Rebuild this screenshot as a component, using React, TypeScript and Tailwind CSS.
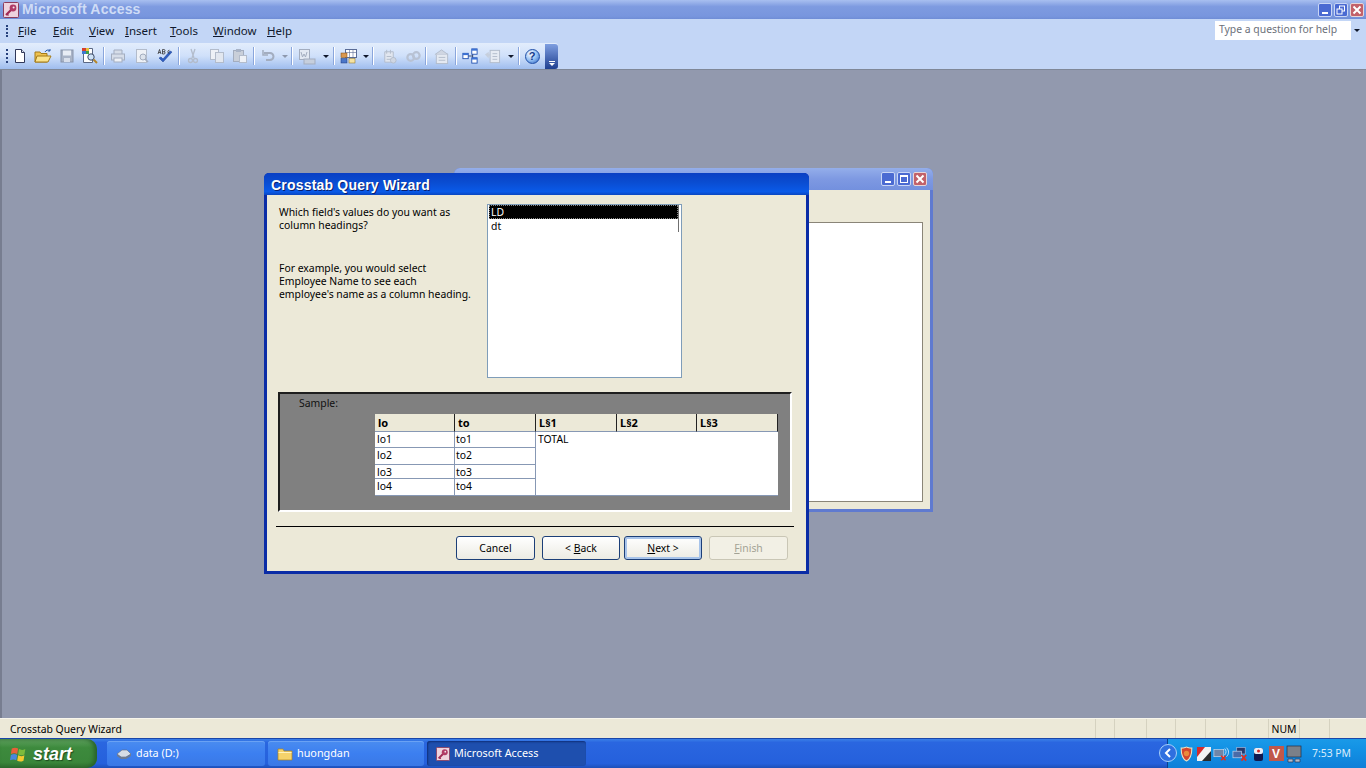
import type { ReactNode } from "react";

const ui = "font-['Noto_Sans',_'Liberation_Sans',_sans-serif]";

function Ul({ children }: { children: ReactNode }) {
  return <span className="underline underline-offset-1">{children}</span>;
}

function AccessIcon({ size = 16 }: { size?: number }) {
  return (
    <svg width={size} height={size} viewBox="0 0 16 16">
      <rect x="0.5" y="0.5" width="15" height="15" rx="1" fill="#eed3de" stroke="#8d3d5c" />
      <path d="M3 13 L8 8" stroke="#a02a55" strokeWidth="2.2" />
      <circle cx="10" cy="6" r="3.4" fill="#b03a66" />
      <circle cx="10.6" cy="5.4" r="1" fill="#f3e4ea" />
      <path d="M4 12l1.5 1.5" stroke="#a02a55" strokeWidth="1.4" />
    </svg>
  );
}

function WinButtons({ maximize }: { maximize?: boolean }) {
  const base = "w-[14px] h-[14px]";
  return (
    <div className="flex gap-[2px]">
      <div className={`${base} rounded-[2px] border border-[#c9d6f5] bg-[#4a6ad2] relative`}>
        <div className="absolute left-[3px] bottom-[2px] w-[6px] h-[2px] bg-white" />
      </div>
      <div className={`${base} rounded-[2px] border border-[#c9d6f5] bg-[#4a6ad2] flex items-center justify-center`}>
        {maximize ? (
          <div className="w-[8px] h-[8px] border border-white border-t-2" />
        ) : (
          <svg width="10" height="10" viewBox="0 0 10 10" fill="none" stroke="#fff">
            <rect x="3.5" y="1" width="5" height="5" />
            <rect x="1" y="4" width="5" height="5" fill="#4a6ad2" />
          </svg>
        )}
      </div>
      <div className={`${base} rounded-[2px] border border-[#e6d5d8] bg-[#c2616a] flex items-center justify-center`}>
        <svg width="10" height="10" viewBox="0 0 10 10" stroke="#fff" strokeWidth="2">
          <path d="M1.5 1.5l7 7M8.5 1.5l-7 7" />
        </svg>
      </div>
    </div>
  );
}

function Sep() {
  return <div className="w-[2px] h-[18px] mx-[1.25px] shrink-0 bg-[#8aa6dc] border-r border-white" />;
}

function Arrow({ dim, w = "w-[10px]" }: { dim?: boolean; w?: string }) {
  return (
    <div className={`${w} flex justify-center shrink-0`}>
      <div className={`border-x-[3px] border-t-[3px] border-x-transparent ${dim ? "border-t-[#8d98ad]" : "border-t-[#10182c]"}`} />
    </div>
  );
}

function Tool({ children, w = "w-[23.5px]" }: { children: ReactNode; w?: string }) {
  return <div className={`${w} h-[18px] flex items-center justify-center shrink-0`}>{children}</div>;
}

const Grey = { fill: "#d6dde8", stroke: "#a3adbf" };

function NewIcon() {
  return (
    <svg width="16" height="16" viewBox="0 0 16 16">
      <path d="M3.5 1.500h6l3 3v10h-9z" fill="#fff" stroke="#30385a" />
      <path d="M9.500 1.500v3h3" fill="#dfe6f2" stroke="#30385a" />
    </svg>
  );
}
function OpenIcon() {
  return (
    <svg width="18" height="16" viewBox="0 0 18 16">
      <path d="M1 4h5l1 1.500h6V14H1z" fill="#eec14f" stroke="#a47a18" />
      <path d="M3 8h14l-3 6H1z" fill="#fbe38a" stroke="#a47a18" />
      <path d="M11 4c1-2 3-2.500 5-1.500M16 1v2h-2" fill="none" stroke="#2a5cab" />
    </svg>
  );
}
function SaveIcon() {
  return (
    <svg width="16" height="16" viewBox="0 0 16 16">
      <rect x="2" y="2" width="12" height="12" fill="#a9b4c7" stroke="#8894aa" />
      <rect x="4" y="2.500" width="8" height="5" fill="#e8edf5" />
      <rect x="5" y="10" width="6" height="4" fill="#d8dfeb" />
    </svg>
  );
}
function SearchIcon() {
  return (
    <svg width="18" height="18" viewBox="0 0 18 18">
      <path d="M2.500 1.500h9v14h-9z" fill="#fff" stroke="#5b6884" />
      <rect x="1" y="1" width="4" height="3" fill="#d6402d" />
      <rect x="5" y="1" width="3" height="3" fill="#e8c13a" />
      <rect x="1" y="4" width="4" height="3" fill="#3e77d0" />
      <rect x="5" y="4" width="3" height="3" fill="#3fa04a" />
      <circle cx="10" cy="10" r="3.200" fill="#cfe3f7" stroke="#3d4a66" />
      <path d="M12.500 12.500l3.500 3.500" stroke="#b5862a" strokeWidth="2" />
    </svg>
  );
}
function PrintIcon() {
  return (
    <svg width="16" height="16" viewBox="0 0 16 16">
      <path d="M4 6V2h8v4" {...Grey} />
      <rect x="1.500" y="6" width="13" height="6" {...Grey} />
      <rect x="4" y="10" width="8" height="4" fill="#eef1f6" stroke="#a3adbf" />
    </svg>
  );
}
function PreviewIcon() {
  return (
    <svg width="16" height="16" viewBox="0 0 16 16">
      <rect x="2.500" y="1.500" width="10" height="13" fill="#eef1f6" stroke="#b3bccb" />
      <circle cx="9" cy="9" r="3" fill="#dde3ec" stroke="#a3adbf" />
      <path d="M11 11l3 3" stroke="#a3adbf" strokeWidth="1.600" />
    </svg>
  );
}
function SpellIcon() {
  return (
    <svg width="18" height="16" viewBox="0 0 18 16">
      <path d="M3 10l4 4 9-10-2-1-7 8-2-2z" fill="#2f5fc4" stroke="#1d3f8e" strokeWidth="0.500" />
      <path d="M2 6l1.500-4.500L5 6M2.600 4.500h1.800M6.500 1.500v4.500h1.400a1 1 0 0 0 0-2.300H6.500M7.900 3.700a1 1 0 0 0 0-2.200H6.500M13.500 2.200a1.600 1.600 0 1 0 0 3.200" fill="none" stroke="#333" strokeWidth="0.800" />
    </svg>
  );
}
function CutIcon() {
  return (
    <svg width="16" height="16" viewBox="0 0 16 16" fill="none" stroke="#b3bccb" strokeWidth="1.300">
      <path d="M6 1l3 9M10 1l-3 9" />
      <circle cx="5.500" cy="12.500" r="2" />
      <circle cx="10.500" cy="12.500" r="2" />
    </svg>
  );
}
function CopyIcon() {
  return (
    <svg width="16" height="16" viewBox="0 0 16 16">
      <rect x="1.500" y="1.500" width="8" height="10" fill="#eef1f6" stroke="#b3bccb" />
      <rect x="6.500" y="4.500" width="8" height="10" fill="#e2e7ef" stroke="#b3bccb" />
    </svg>
  );
}
function PasteIcon() {
  return (
    <svg width="16" height="16" viewBox="0 0 16 16">
      <rect x="1.500" y="2.500" width="10" height="11" fill="#c9cfd9" stroke="#a3adbf" />
      <rect x="4" y="1" width="5" height="3" fill="#a9b4c7" />
      <rect x="7.500" y="7.500" width="7" height="7" fill="#eef1f6" stroke="#b3bccb" />
    </svg>
  );
}
function UndoIcon() {
  return (
    <svg width="16" height="16" viewBox="0 0 16 16" fill="none" stroke="#a3adbf" strokeWidth="2">
      <path d="M4 5h6a3 3 0 0 1 0 7H6" />
      <path d="M3 2v5h5" strokeWidth="1.500" />
    </svg>
  );
}
function OfficeIcon() {
  return (
    <svg width="18" height="17" viewBox="0 0 18 17">
      <rect x="1.500" y="1.500" width="10" height="10" fill="#e3e9f3" stroke="#a3adbf" />
      <path d="M3 4l1.500 5 1.500-3 1.500 3L9 4" fill="none" stroke="#a3adbf" />
      <rect x="6" y="11" width="11" height="5" fill="#c6cfdd" stroke="#a3adbf" />
    </svg>
  );
}
function AnalyzeIcon() {
  return (
    <svg width="17" height="16" viewBox="0 0 17 16">
      <rect x="5.500" y="1.500" width="11" height="8" fill="#fff" stroke="#5a6c96" />
      <path d="M5.500 4.500h11M9.500 1.500v8M13 1.500v8" stroke="#5a6c96" strokeWidth="0.600" />
      <rect x="1" y="5" width="6" height="4.500" fill="#d9974f" stroke="#7c4a12" strokeWidth="0.500" />
      <rect x="1" y="10.500" width="6" height="4.500" fill="#4a76c8" stroke="#1e3b7c" strokeWidth="0.500" />
      <rect x="9" y="10.500" width="6" height="4.500" fill="#f5e3a2" stroke="#8a6a17" strokeWidth="0.500" />
    </svg>
  );
}
function ScriptIcon() {
  return (
    <svg width="17" height="17" viewBox="0 0 18 18">
      <path d="M4 4h9v11H4z" fill="#e1e6ef" stroke="#b3bccb" />
      <path d="M6 2v4M10 2v4M6 9h5M6 12h5" stroke="#b3bccb" />
      <circle cx="13" cy="13" r="3" fill="#cfd6e2" stroke="#b3bccb" />
    </svg>
  );
}
function LinkIcon() {
  return (
    <svg width="17" height="13" viewBox="0 0 18 14" fill="none" stroke="#b8c2d4" strokeWidth="2.400">
      <circle cx="6" cy="8" r="3.600" />
      <circle cx="12" cy="6" r="3.600" />
    </svg>
  );
}
function PropsIcon() {
  return (
    <svg width="17" height="17" viewBox="0 0 18 18">
      <rect x="3.500" y="6.500" width="12" height="10" fill="#e4e9f1" stroke="#b3bccb" />
      <path d="M2 7l7-5 7 5" fill="#cfd6e2" stroke="#b3bccb" />
      <path d="M6 10h7M6 13h7" stroke="#b3bccb" />
    </svg>
  );
}
function RelIcon() {
  return (
    <svg width="16" height="16" viewBox="0 0 18 18">
      <path d="M6 9h6M12 4v10" stroke="#24365f" fill="none" />
      <rect x="1" y="6" width="6" height="6" fill="#fff" stroke="#1e4fb0" />
      <rect x="1" y="6" width="6" height="2" fill="#3b72d6" />
      <rect x="11" y="1" width="6" height="6" fill="#fff" stroke="#1e4fb0" />
      <rect x="11" y="1" width="6" height="2" fill="#3b72d6" />
      <rect x="11" y="11" width="6" height="6" fill="#fff" stroke="#1e4fb0" />
      <rect x="11" y="11" width="6" height="2" fill="#3b72d6" />
    </svg>
  );
}
function NewObjIcon() {
  return (
    <svg width="17" height="17" viewBox="0 0 18 18">
      <rect x="6.500" y="2.500" width="10" height="13" fill="#e6ebf3" stroke="#b3bccb" />
      <path d="M9 6h5M9 9h5M9 12h5" stroke="#b3bccb" />
      <path d="M1 7l4-3v2h2v3H5v2z" fill="#c6cfdd" />
    </svg>
  );
}
function HelpIcon() {
  return (
    <div className="w-[15px] h-[15px] rounded-full bg-[radial-gradient(circle_at_35%_30%,#ffffff,#8ab8f0_55%,#2558b8)] border border-[#1f4fa8] flex items-center justify-center text-[11px] leading-none font-bold text-[#123a8c] font-['Liberation_Sans',_sans-serif]">
      ?
    </div>
  );
}

function Grip({ h }: { h: string }) {
  return (
    <div className={`w-[2px] ${h} flex flex-col justify-between shrink-0`}>
      {[0, 1, 2, 3].map((i) => (
        <div key={i} className="w-[2px] h-[2px] bg-[#27417c]" />
      ))}
    </div>
  );
}

function Toolbar() {
  return (
    <div className="h-[26px] flex items-stretch bg-[#c3d6f6] border-b border-[#7f8797] box-content">
      <div className="w-[558px] flex items-center pl-[6px] rounded-r-[3px] relative bg-[linear-gradient(#e3edfc,#cfe0fa_50%,#9fbdee)]">
        <Grip h="h-[15px]" />
        <Tool><NewIcon /></Tool>
        <Tool><OpenIcon /></Tool>
        <Tool><SaveIcon /></Tool>
        <Tool><SearchIcon /></Tool>
        <Sep />
        <Tool><PrintIcon /></Tool>
        <Tool><PreviewIcon /></Tool>
        <Tool><SpellIcon /></Tool>
        <Sep />
        <Tool><CutIcon /></Tool>
        <Tool><CopyIcon /></Tool>
        <Tool><PasteIcon /></Tool>
        <Sep />
        <Tool><UndoIcon /></Tool>
        <Arrow dim />
        <Sep />
        <Tool w="w-[25px]"><OfficeIcon /></Tool>
        <Arrow w="w-[12px]" />
        <Sep />
        <Tool w="w-[25px]"><AnalyzeIcon /></Tool>
        <Arrow />
        <Sep />
        <Tool w="w-[27px]"><ScriptIcon /></Tool>
        <Tool w="w-[21px]"><LinkIcon /></Tool>
        <Sep />
        <Tool w="w-[26px]"><PropsIcon /></Tool>
        <Sep />
        <Tool w="w-[22px]"><RelIcon /></Tool>
        <Tool w="w-[24px]"><NewObjIcon /></Tool>
        <Arrow w="w-[12px]" />
        <Sep />
        <Tool w="w-[22px]"><HelpIcon /></Tool>
        <div className="absolute right-0 top-[1px] bottom-0 w-[13px] rounded-r-[3px] bg-[linear-gradient(#7e9ee0,#1e3f90)] flex flex-col items-center justify-end pb-[3px] gap-[1px]">
          <div className="w-[6px] h-px bg-white" />
          <div className="border-x-[3px] border-t-[3px] border-x-transparent border-t-white" />
        </div>
      </div>
    </div>
  );
}

function MenuBar() {
  const items = [
    ["F", "ile", "w-[35px]"],
    ["E", "dit", "w-[36px]"],
    ["V", "iew", "w-[36px]"],
    ["I", "nsert", "w-[45px]"],
    ["T", "ools", "w-[43px]"],
    ["W", "indow", "w-[54px]"],
    ["H", "elp", "w-[30px]"],
  ];
  return (
    <div className="h-[24px] flex items-center bg-[#c3d6f6] pl-[6px] relative">
      <Grip h="h-[12px]" />
      <div className="w-[10px]" />
      {items.map(([a, b, w]) => (
        <div key={a} className={`${w} text-[11.5px] text-[#10182c] shrink-0`}>
          <Ul>{a}</Ul>
          {b}
        </div>
      ))}
      <div className="ml-auto mr-[4px] mb-[2px] w-[147px] h-[19px] bg-white flex items-center text-[10.4px] text-[#6b7079] whitespace-nowrap">
        <span className="pl-[4px] flex-1">Type a question for help</span>
        <div className="w-[11px] h-full bg-[#c3d6f6] flex items-center justify-center">
          <div className="border-x-[3px] border-t-[3px] border-x-transparent border-t-[#10182c]" />
        </div>
      </div>
    </div>
  );
}

function WizardButton({ children, w, def, off }: { children: ReactNode; w: string; def?: boolean; off?: boolean }) {
  const tone = off
    ? "border-[#c9c6b5] text-[#a3a294] bg-[#f2f0e5]"
    : def
      ? "border-[#1c3f78] text-black shadow-[inset_0_0_0_2px_#a8c4ea] bg-[linear-gradient(#ffffff,#ecebe3)]"
      : "border-[#1c3f78] text-black bg-[linear-gradient(#ffffff,#ecebe3)]";
  return (
    <div className={`${w} h-[24px] pt-[1px] rounded-[3px] border flex items-center justify-center text-[10.4px] ${tone}`}>
      {children}
    </div>
  );
}

const rows = [
  { h: "h-[16px]", a: "lo1", b: "to1" },
  { h: "h-[17px]", a: "lo2", b: "to2" },
  { h: "h-[14px]", a: "lo3", b: "to3" },
  { h: "h-[17px]", a: "lo4", b: "to4" },
];

function SampleGrid() {
  const heads = [
    ["lo", "w-[80px]"],
    ["to", "w-[81px]"],
    ["L§1", "w-[81px]"],
    ["L§2", "w-[80px]"],
    ["L§3", "w-[81px]"],
  ];
  return (
    <div className="w-[403px]">
      <div className="h-[18px] flex bg-[#ece9d8]">
        {heads.map(([t, w]) => (
          <div key={t} className={`${w} pl-[3px] font-bold text-[11px] leading-[18px] text-black border-r border-r-[#222] border-b-[#8798b4] border-b`}>
            {t}
          </div>
        ))}
      </div>
      <div className="flex bg-white h-[64px] text-[10.4px] text-black">
        <div className="w-[161px]">
          {rows.map((r) => (
            <div key={r.a} className={`${r.h} flex border-b border-r border-[#8798b4]`}>
              <div className="w-[80px] pl-[2px] leading-[14px] border-r border-[#8798b4]">{r.a}</div>
              <div className="pl-[1px] leading-[14px]">{r.b}</div>
            </div>
          ))}
        </div>
        <div className="flex-1 pl-[2px] leading-[14px] border-b border-[#8798b4]">TOTAL</div>
      </div>
    </div>
  );
}

function WizardDialog() {
  return (
    <div className={`absolute left-[262px] top-[103px] w-[545px] h-[401px] rounded-t-[5px] bg-[#0a2ca6] flex flex-col px-[3px] pb-[3px] ${ui}`}>
      <div className="h-[22px] shrink-0 -mx-[3px] px-[7px] pt-[3px] rounded-t-[5px] bg-[linear-gradient(#0a3fc4,#0a4cd0_40%,#0a5ae8_85%,#0a46c0)] flex items-center">
        <span className="font-['Liberation_Sans',_sans-serif] text-[14px] font-bold text-white tracking-[0.2px] [text-shadow:1px_1px_0_#0a1f6e]">
          Crosstab Query Wizard
        </span>
      </div>
      <div className="flex-1 bg-[#ece9d8] flex flex-col pl-[12px] pr-[13px]">
        <div className="flex h-[197px] pt-[9px]">
          <div className="w-[208px] text-[10.4px] leading-[13px] text-black pt-[2px]">
            <p>
              Which field's values do you want as
              <br />
              column headings?
            </p>
            <p className="mt-[30px]">
              For example, you would select
              <br />
              Employee Name to see each
              <br />
              employee's name as a column heading.
            </p>
          </div>
          <div className="w-[195px] h-[174px] bg-white border border-[#7f9db9] text-[10.4px] text-black pl-[1px] pr-[3px] relative">
            <div className="h-[14px] bg-black text-white pl-[2px] leading-[14px] outline-1 outline-dotted outline-[#888] -outline-offset-1">LD</div>
            <div className="pl-[2px] leading-[14px]">dt</div>
            <div className="absolute right-[2px] top-0 w-px h-[27px] bg-[#707070]" />
          </div>
        </div>
        <div className="h-[120px] ml-[-1px] w-[514px] bg-[#808080] border-t-2 border-l-2 border-t-[#1e1e1e] border-l-[#1e1e1e] border-r-2 border-b-2 border-r-white border-b-white flex flex-col">
          <div className="text-[10.4px] text-[#111] pl-[19px] leading-[13px] pt-[3px] h-[20px]">Sample:</div>
          <div className="pl-[95px]">
            <SampleGrid />
          </div>
        </div>
        <div className="h-px bg-black mt-[14px] -ml-[3px] w-[518px]" />
        <div className="flex mt-[9px] pl-[177px]">
          <WizardButton w="w-[79px]">Cancel</WizardButton>
          <div className="w-[7px]" />
          <WizardButton w="w-[78px]">
            &lt;&nbsp;<Ul>B</Ul>ack
          </WizardButton>
          <div className="w-[4px]" />
          <WizardButton w="w-[78px]" def>
            <Ul>N</Ul>ext &gt;
          </WizardButton>
          <div className="w-[7px]" />
          <WizardButton w="w-[79px]" off>
            <Ul>F</Ul>inish
          </WizardButton>
        </div>
      </div>
    </div>
  );
}

function BackWindow() {
  return (
    <div className="absolute left-[452px] top-[98px] w-[479px] h-[344px] rounded-t-[6px] bg-[#5f7ad0] flex flex-col px-[3px] pb-[3px]">
      <div className="h-[22px] shrink-0 -mx-[3px] rounded-t-[6px] bg-[linear-gradient(#94aeea,#7e99e2_50%,#7390de)] flex items-center justify-end pr-[6px]">
        <WinButtons maximize />
      </div>
      <div className="flex-1 bg-[#ece9d8] flex justify-end pt-[32px] pr-[7px] pb-[7px]">
        <div className="w-[115px] bg-white border border-[#8a8578] border-l-0" />
      </div>
    </div>
  );
}

function Status() {
  const cells = ["w-[19px]", "w-[32px]", "w-[29px]", "w-[30px]", "w-[31px]", "w-[32px]", "w-[31px]", "w-[30px]", "w-[35px]"];
  return (
    <div className="h-[20px] bg-[#ece9d8] flex items-stretch border-t border-[#f8f6ec] text-[10.4px] text-black">
      <div className="flex-1 pl-[10px] leading-[21px]">Crosstab Query Wizard</div>
      {cells.map((w, i) => (
        <div key={i} className={`${w} border-l border-[#d5d2c0] text-center leading-[21px]`}>
          {i === 6 ? "NUM" : ""}
        </div>
      ))}
      <div className="w-[2px]" />
    </div>
  );
}

function XpFlag() {
  return (
    <svg width="18" height="18" viewBox="0 0 20 20">
      <path d="M2 4c3-1.500 5-1 7 0l-1 6c-2-1-4-1.500-7 0z" fill="#e8603a" />
      <path d="M10 4.500c2 1 4 1.500 7 0l-1 6c-3 1.500-5 1-7 0z" fill="#7dbb3c" />
      <path d="M1 11c3-1.500 5-1 7 0l-1 6c-2-1-4-1.500-7 0z" fill="#4a86dc" />
      <path d="M9 11.500c2 1 4 1.500 7 0l-1 6c-3 1.500-5 1-7 0z" fill="#f5c92f" />
    </svg>
  );
}

function Task({ w, active, icon, label }: { w: string; active?: boolean; icon: ReactNode; label: string }) {
  return (
    <div
      className={`${w} h-[25px] rounded-[3px] flex items-center pl-[9px] gap-[4px] text-[10.8px] text-white shrink-0 ${
        active
          ? "bg-[#1e4fae] shadow-[inset_1px_1px_2px_#0f2f78]"
          : "bg-[linear-gradient(#4a8cf0,#3c7ff0_50%,#3a78e6)] shadow-[inset_0_1px_0_#6aa2f4]"
      }`}
    >
      {icon}
      <span>{label}</span>
    </div>
  );
}

function DriveIcon() {
  return (
    <svg width="16" height="12" viewBox="0 0 16 12">
      <path d="M1 6l5-4h5l4 4-5 3H5z" fill="#d8dde6" stroke="#5e6a80" strokeWidth="0.600" />
      <path d="M1 6l4 3h5l5-3v2l-5 3H5L1 8z" fill="#6f7b92" />
    </svg>
  );
}

function FolderIcon() {
  return (
    <svg width="16" height="14" viewBox="0 0 16 14">
      <path d="M1 2h5l1 2h8v9H1z" fill="#f5d36b" stroke="#a98324" strokeWidth="0.700" />
      <path d="M1.500 5h13v1H1.500z" fill="#fff3bf" />
    </svg>
  );
}

function TrayItem({ children }: { children: ReactNode }) {
  return <div className="w-[18px] flex justify-center shrink-0">{children}</div>;
}

function Tray() {
  return (
    <div className="w-[199px] h-full shrink-0 flex items-center relative pl-[9px] bg-[linear-gradient(#1a9ae8,#1290e4_40%,#0f7fd8)] border-l border-[#0b3f8c] text-[10.4px] text-white whitespace-nowrap">
      <div className="absolute -left-[9px] top-[5px] w-[18px] h-[18px] rounded-full bg-[#2f6fe0] border border-[#a8d0f8] flex items-center justify-center">
        <svg width="8" height="10" viewBox="0 0 8 10" fill="none" stroke="#fff" strokeWidth="2">
          <path d="M6 1L2 5l4 4" />
        </svg>
      </div>
      <TrayItem>
        <svg width="13" height="16" viewBox="0 0 12 15">
          <path d="M1 2c3 0 4-1 5-1s2 1 5 1c0 6-1 10-5 12C2 12 1 8 1 2z" fill="#d3452f" stroke="#e9e3c6" />
          <circle cx="6" cy="7" r="2.500" fill="#e98a3a" />
        </svg>
      </TrayItem>
      <TrayItem>
        <svg width="16" height="16" viewBox="0 0 16 16">
          <rect x="1" y="1" width="14" height="14" fill="#f2f2f2" />
          <path d="M1 1h8L1 11z" fill="#d42c2c" />
          <path d="M15 15H6l9-10z" fill="#2a2a2a" />
        </svg>
      </TrayItem>
      <TrayItem>
        <svg width="18" height="16" viewBox="0 0 20 16">
          <rect x="1" y="3" width="11" height="8" fill="#6f86a8" stroke="#d5e0f0" strokeWidth="0.700" />
          <path d="M13 2c2 2 2 5 0 7M15 1c3 3 3 7 0 10" fill="none" stroke="#d5e8fa" />
          <path d="M9 10l5 5M14 10l-5 5" stroke="#e52c1c" strokeWidth="1.800" />
        </svg>
      </TrayItem>
      <TrayItem>
        <svg width="17" height="16" viewBox="0 0 18 16">
          <rect x="5" y="1" width="9" height="7" fill="#27386a" stroke="#a9bde0" strokeWidth="0.700" />
          <rect x="1" y="5" width="9" height="7" fill="#4a6ba8" stroke="#c9d8f0" strokeWidth="0.700" />
          <path d="M10 9l5 6M15 9l-5 6" stroke="#e52c1c" strokeWidth="1.800" />
        </svg>
      </TrayItem>
      <TrayItem>
        <svg width="11" height="16" viewBox="0 0 11 16">
          <rect x="1" y="2" width="9" height="13" rx="2" fill="#12194f" />
          <rect x="1" y="2" width="9" height="6" rx="2" fill="#e9edf5" />
          <circle cx="5.500" cy="5" r="1.500" fill="#d22a2a" />
        </svg>
      </TrayItem>
      <TrayItem>
        <div className="w-[15px] h-[15px] bg-[#c0584a] text-white text-[12px] font-bold flex items-center justify-center font-['Liberation_Sans',_sans-serif]">V</div>
      </TrayItem>
      <TrayItem>
        <svg width="16" height="18" viewBox="0 0 16 18">
          <rect x="1" y="1" width="14" height="11" fill="#7b8088" stroke="#222c44" strokeWidth="0.700" />
          <path d="M2 14h5v3H2zM9 14h5v3H9z" fill="#b4bccb" stroke="#2b3552" strokeWidth="0.700" />
        </svg>
      </TrayItem>
      <span className="ml-[9px] text-[#dcecfb]">7:53 PM</span>
    </div>
  );
}

function Taskbar() {
  return (
    <div className="h-[30px] flex items-center bg-[linear-gradient(#3a7fe8,#2a66e0_12%,#2560dc_85%,#1d4fb8)] border-t border-[#1a46a8] text-white">
      <div className="w-[97px] h-full shrink-0 rounded-r-[10px] bg-[linear-gradient(#5fa15f,#3d8a3d_30%,#3a863a_80%,#2f6f2f)] flex items-center pl-[10px] gap-[5px] shadow-[inset_-3px_0_4px_#28622a]">
        <XpFlag />
        <span className="font-['Liberation_Sans',_sans-serif] italic font-bold text-[18px] leading-none text-white [text-shadow:1px_1px_1px_#1e4a1e]">start</span>
      </div>
      <div className="w-[10px] shrink-0" />
      <div className="flex gap-[3px] flex-1">
        <Task w="w-[158px]" icon={<DriveIcon />} label="data (D:)" />
        <Task w="w-[156px]" icon={<FolderIcon />} label="huongdan" />
        <Task w="w-[159px]" active icon={<AccessIcon size={14} />} label="Microsoft Access" />
      </div>
      <Tray />
    </div>
  );
}

export default function App() {
  return (
    <div className={`w-[1366px] h-[768px] overflow-hidden flex flex-col ${ui}`}>
      <div className="h-[19px] flex items-center bg-[linear-gradient(#a8bff0,#7e9be0_35%,#7896de_85%,#6f8dd6)] pl-[3px] pr-[2px]">
        <AccessIcon />
        <span className="ml-[3px] font-['Liberation_Sans',_sans-serif] text-[14px] font-bold text-[#cfdcf6] tracking-[0.2px]">Microsoft Access</span>
        <div className="ml-auto">
          <WinButtons />
        </div>
      </div>
      <MenuBar />
      <Toolbar />
      <div className="flex-1 relative bg-[#9299ae] border-l-2 border-l-[#777d90]">
        <BackWindow />
        <WizardDialog />
      </div>
      <Status />
      <Taskbar />
    </div>
  );
}
